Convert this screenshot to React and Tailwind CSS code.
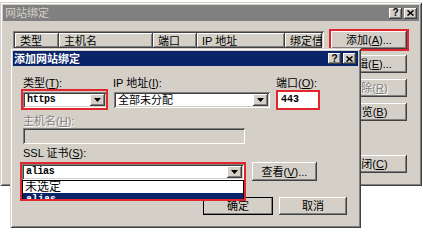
import { useState } from 'react'

const raised = 'bg-[#d4d0c8] shadow-[inset_-1px_-1px_#404040,inset_1px_1px_#ffffff,inset_-2px_-2px_#808080,inset_2px_2px_#d4d0c8]'
const sunken = 'shadow-[inset_1px_1px_#808080,inset_-1px_-1px_#ffffff,inset_2px_2px_#404040,inset_-2px_-2px_#d4d0c8]'
const frame = 'bg-[#d4d0c8] shadow-[inset_1px_1px_#d4d0c8,inset_-1px_-1px_#404040,inset_2px_2px_#ffffff,inset_-2px_-2px_#808080]'

function Key({ k }) {
  return <span>(<span className="underline">{k}</span>)</span>
}

function TitleButtons() {
  return (
    <div className="flex gap-[2px]">
      <div className={`w-[13px] h-[11px] ${raised} flex items-center justify-center text-[10px] leading-none font-bold text-black font-['Liberation_Sans',sans-serif]`}>?</div>
      <div className={`w-[13px] h-[11px] ${raised} flex items-center justify-center`}>
        <svg width="7" height="6" viewBox="0 0 7 6">
          <path d="M0.5 0.5 L6.5 5.5 M6.5 0.5 L0.5 5.5" stroke="#000" strokeWidth="1.6" />
        </svg>
      </div>
    </div>
  )
}

function Arrow() {
  return (
    <div className={`w-[15px] h-[12px] ${raised} flex items-center justify-center`}>
      <svg width="7" height="4" viewBox="0 0 7 4"><polygon points="0,0 7,0 3.5,4" fill="#000" /></svg>
    </div>
  )
}

function Combo({ value, mono, w }) {
  return (
    <div className={`${w} h-[16px] bg-white ${sunken} flex items-center justify-between pl-[4px] pr-[2px]`}>
      <span className={mono ? "font-['Liberation_Mono',monospace] text-[10px] font-bold tracking-[-0.3px]" : ''}>{value}</span>
      <Arrow />
    </div>
  )
}

function Btn({ children, w, disabled, def }) {
  return (
    <div className={`${w} h-[18px] ${raised} ${def ? 'outline outline-1 outline-black -outline-offset-1' : ''} flex items-center justify-center ${disabled ? 'text-[#808080] [text-shadow:1px_1px_#ffffff]' : 'text-black'}`}>
      {children}
    </div>
  )
}

function Red({ className }) {
  return <div className={`absolute border-2 border-[#e3262e] pointer-events-none ${className}`} />
}

export default function App() {
  const [selected] = useState('alias')
  const cols = [['类型', 'w-[44px]'], ['主机名', 'w-[94px]'], ['端口', 'w-[44px]'], ['IP 地址', 'w-[88px]'], ['绑定信', 'w-[37px]']]

  return (
    <div className="w-[423px] h-[246px] relative bg-white overflow-hidden text-[11px] leading-[12px] text-black font-['Liberation_Sans','Noto_Sans_CJK_SC',sans-serif]">
      {/* 网站绑定 */}
      <div className={`absolute left-0 top-[2px] w-[422px] h-[184px] p-[3px] ${frame}`}>
        <div className="h-[16px] bg-[#808080] flex items-center justify-between pl-[2px] pr-[2px]">
          <span className="text-[#d4d0c8]">网站绑定</span>
          <TitleButtons />
        </div>
        <div className="flex pl-[10px] pt-[10px]">
          <div className={`w-[311px] h-[142px] bg-white ${sunken} p-[2px]`}>
            <div className="flex">
              {cols.map(([t, w]) => (
                <div key={t} className={`${w} h-[15px] ${raised} flex items-center pl-[5px] overflow-hidden whitespace-nowrap`}>{t}</div>
              ))}
            </div>
          </div>
          <div className="ml-[7px] flex flex-col gap-[6px]">
            <div className="relative">
              <Btn w="w-[76px]">添加<Key k="A" />...</Btn>
              <Red className="-inset-[2px]" />
            </div>
            <Btn w="w-[76px]">编辑<Key k="E" />...</Btn>
            <Btn w="w-[76px]" disabled>删除<Key k="R" /></Btn>
            <Btn w="w-[76px]">浏览<Key k="B" /></Btn>
            <div className="mt-[28px]">
              <Btn w="w-[76px]">关闭<Key k="C" /></Btn>
            </div>
          </div>
        </div>
      </div>

      {/* 添加网站绑定 */}
      <div className={`absolute left-[10px] top-[48px] w-[351px] h-[180px] p-[3px] ${frame}`}>
        <div className="h-[15px] bg-[#0a246a] flex items-center justify-between pl-[1px] pr-[2px]">
          <span className="text-white font-bold">添加网站绑定</span>
          <TitleButtons />
        </div>
        <div className="pl-[10px] pr-[11px] pt-[11px]">
          <div className="flex">
            <div className="w-[84px]">
              <div className="h-[12px] mb-[3px]">类型<Key k="T" />:</div>
              <div className="relative">
                <Combo value="https" mono w="w-[84px]" />
                <Red className="-left-[2px] -right-[1px] -top-[3px] -bottom-[2px]" />
              </div>
            </div>
            <div className="ml-[6px] w-[157px]">
              <div className="h-[12px] mb-[3px]">IP 地址<Key k="I" />:</div>
              <div className="ml-[1px]"><Combo value="全部未分配" w="w-[156px]" /></div>
            </div>
            <div className="ml-[6px]">
              <div className="h-[12px] mb-[3px]">端口<Key k="O" />:</div>
              <div className="relative ml-[2px] w-[40px] h-[16px] bg-white flex items-center pl-[3px]">
                <span className="font-['Liberation_Mono',monospace] text-[10px] font-bold">443</span>
                <Red className="-inset-[2px]" />
              </div>
            </div>
          </div>

          <div className="mt-[7px] h-[12px] text-[#808080] [text-shadow:1px_1px_#ffffff]">主机名<Key k="H" />:</div>
          <div className={`mt-[1px] w-[222px] h-[16px] bg-[#d4d0c8] ${sunken}`} />

          <div className="mt-[3px] h-[12px]">SSL 证书<Key k="S" />:</div>
          <div className="mt-[3px] flex items-center">
            <div className="relative -ml-[1px] z-10">
              <Combo value={selected} mono w="w-[222px]" />
              <div className="absolute top-[16px] left-0 w-[222px] h-[19px] bg-white border border-black border-b-0 overflow-hidden">
                <div className="h-[12px] pl-[2px] text-[12px] leading-[12px]">未选定</div>
                <div className="h-[12px] bg-[#0a246a] text-white pl-[3px] font-['Liberation_Mono',monospace] text-[10px] font-bold leading-[14px]">alias</div>
              </div>
              <Red className="-left-[2px] -top-[2px] w-[226px] h-[39px]" />
            </div>
            <div className="ml-[8px]">
              <div className={`w-[65px] h-[19px] ${raised} flex items-center justify-center`}>查看<Key k="V" />...</div>
            </div>
          </div>

          <div className="mt-[16px] flex justify-end gap-[6px]">
            <Btn w="w-[70px]" def>确定</Btn>
            <Btn w="w-[68px]">取消</Btn>
          </div>
        </div>
      </div>
    </div>
  )
}
